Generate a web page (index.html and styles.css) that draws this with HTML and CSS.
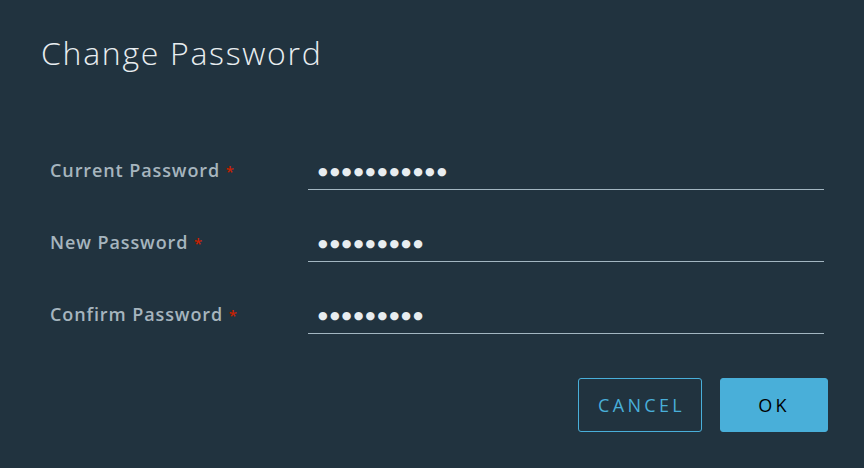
FILE: index.html
```html
<!DOCTYPE html>
<html>
<head>
<meta charset="utf-8">
<link rel="stylesheet" href="styles.css">
</head>
<body>
<div class="dialog">
  <h1 class="title">Change Password</h1>
  <form class="form">
    <div class="row">
      <label class="label">Current Password <span class="req">*</span></label>
      <div class="field"><span class="dots">●●●●●●●●●●●</span></div>
    </div>
    <div class="row">
      <label class="label">New Password <span class="req">*</span></label>
      <div class="field"><span class="dots">●●●●●●●●●</span></div>
    </div>
    <div class="row">
      <label class="label">Confirm Password <span class="req">*</span></label>
      <div class="field"><span class="dots">●●●●●●●●●</span></div>
    </div>
  </form>
  <div class="actions">
    <button class="btn btn-outline" type="button">CANCEL</button>
    <button class="btn btn-primary" type="button">OK</button>
  </div>
</div>
</body>
</html>
```
FILE: styles.css
```css
html, body {
  margin: 0;
  padding: 0;
  background: #21333f;
  width: 864px;
  height: 468px;
  overflow: hidden;
}
.dialog {
  font-family: "Open Sans", Lato, sans-serif;
  padding: 34px 36px 0 41px;
  box-sizing: border-box;
}
.title {
  margin: 0;
  font-size: 32px;
  font-weight: 300;
  color: #e8edf0;
  line-height: 38px;
  letter-spacing: 1.7px;
}
.form {
  margin-top: 78px;
  padding-left: 9px;
}
.row {
  display: grid;
  grid-template-columns: 258px 516px;
  align-items: end;
  height: 72px;
}
.row:first-child { height: 40px; }
.label {
  color: #a6b5be;
  font-size: 18px;
  font-weight: 600;
  line-height: 20px;
  padding-bottom: 9px;
  letter-spacing: 0.9px;
}
.req {
  color: #c92100;
  font-size: 15px;
  margin-left: 0;
}
.field {
  border-bottom: 1px solid #a3b6c1;
  height: 36px;
  display: flex;
  align-items: center;
  padding-left: 10px;
  box-sizing: border-box;
}
.dots {
  color: #e8edf0;
  font-family: "DejaVu Sans", sans-serif;
  font-size: 11px;
  letter-spacing: 2.3px;
  line-height: 10px;
}
.actions {
  display: flex;
  justify-content: flex-end;
  gap: 18px;
  margin-top: 44px;
}
.btn {
  font-family: "Open Sans", Lato, sans-serif;
  font-size: 18px;
  letter-spacing: 3.3px;
  border-radius: 3px;
  cursor: pointer;
  height: 54px;
  padding: 0 0 0 3px;
}
.btn-outline {
  width: 124px;
  background: transparent;
  border: 1px solid #49afd9;
  color: #49afd9;
}
.btn-primary {
  width: 108px;
  background: #49afd9;
  border: 1px solid #49afd9;
  color: #000;
  font-weight: 500;
  padding: 0;
}
```
